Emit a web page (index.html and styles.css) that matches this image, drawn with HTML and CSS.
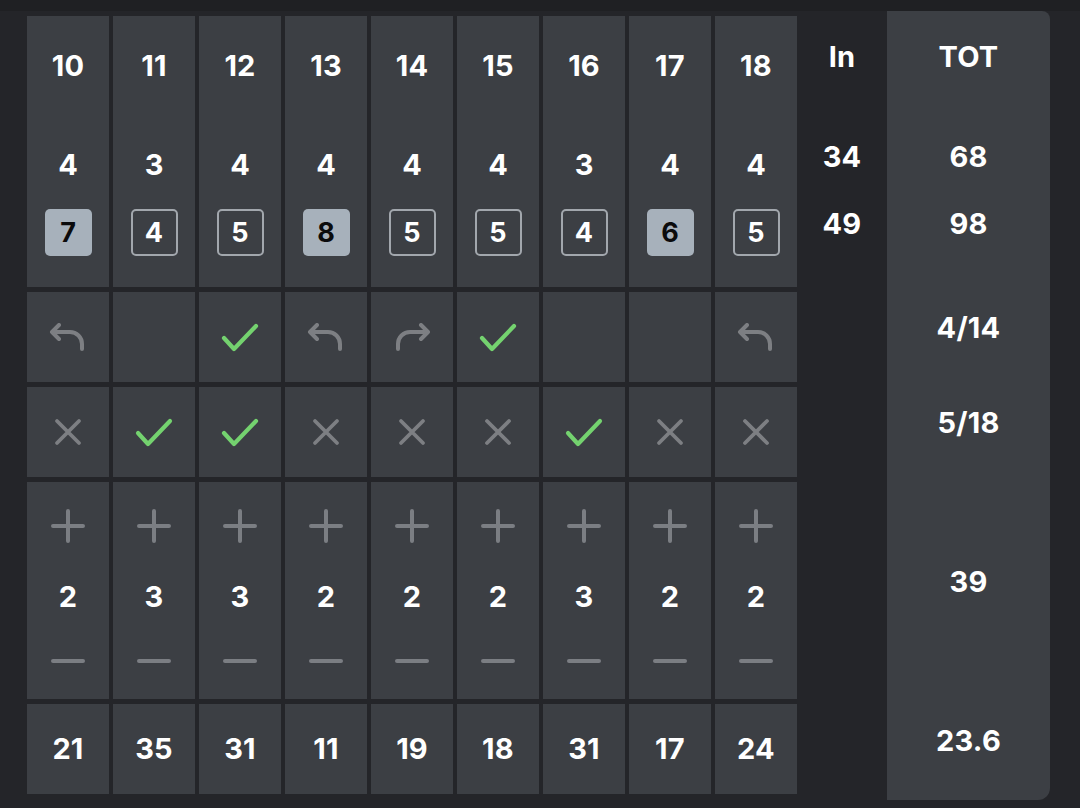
FILE: index.html
```html
<!DOCTYPE html>
<html>
<head>
<meta charset="utf-8">
<link rel="stylesheet" href="styles.css">
<title>Scorecard</title>
</head>
<body>
<svg width="0" height="0" class="defs">
  <defs>
    <symbol id="undo" viewBox="0 0 38 28"><path d="M3 9 H21 A12 12 0 0 1 33 21 V26 M10 2 L3 9 L10 16" fill="none" stroke="currentColor" stroke-width="4" stroke-linecap="round" stroke-linejoin="round"/></symbol>
    <symbol id="redo" viewBox="0 0 38 28"><path d="M35 9 H17 A12 12 0 0 0 5 21 V26 M28 2 L35 9 L28 16" fill="none" stroke="currentColor" stroke-width="4" stroke-linecap="round" stroke-linejoin="round"/></symbol>
    <symbol id="check" viewBox="0 0 38 30"><path d="M3 16 L13 27 L35 4" fill="none" stroke="currentColor" stroke-width="4.2" stroke-linecap="round" stroke-linejoin="round"/></symbol>
    <symbol id="cross" viewBox="0 0 28 28"><path d="M3 3 L25 25 M25 3 L3 25" fill="none" stroke="currentColor" stroke-width="3.8" stroke-linecap="round"/></symbol>
    <symbol id="plus" viewBox="0 0 34 34"><path d="M17 2 V32 M2 17 H32" fill="none" stroke="currentColor" stroke-width="4" stroke-linecap="round"/></symbol>
    <symbol id="minus" viewBox="0 0 34 6"><path d="M2 3 H32" fill="none" stroke="currentColor" stroke-width="4" stroke-linecap="round"/></symbol>
  </defs>
</svg>
<div class="topband"></div>
<div class="board">
  <div class="grid">
    <!-- row 1 -->
    <div class="cell hole"><div class="num">10</div><div class="par">4</div><div class="score filled">7</div></div>
    <div class="cell hole"><div class="num">11</div><div class="par">3</div><div class="score outline">4</div></div>
    <div class="cell hole"><div class="num">12</div><div class="par">4</div><div class="score outline">5</div></div>
    <div class="cell hole"><div class="num">13</div><div class="par">4</div><div class="score filled">8</div></div>
    <div class="cell hole"><div class="num">14</div><div class="par">4</div><div class="score outline">5</div></div>
    <div class="cell hole"><div class="num">15</div><div class="par">4</div><div class="score outline">5</div></div>
    <div class="cell hole"><div class="num">16</div><div class="par">3</div><div class="score outline">4</div></div>
    <div class="cell hole"><div class="num">17</div><div class="par">4</div><div class="score filled">6</div></div>
    <div class="cell hole"><div class="num">18</div><div class="par">4</div><div class="score outline">5</div></div>
    <!-- row 2 fairway -->
    <div class="cell icon"><svg class="ic arrow gray"><use href="#undo"/></svg></div>
    <div class="cell icon"></div>
    <div class="cell icon"><svg class="ic chk green"><use href="#check"/></svg></div>
    <div class="cell icon"><svg class="ic arrow gray"><use href="#undo"/></svg></div>
    <div class="cell icon"><svg class="ic arrow gray"><use href="#redo"/></svg></div>
    <div class="cell icon"><svg class="ic chk green"><use href="#check"/></svg></div>
    <div class="cell icon"></div>
    <div class="cell icon"></div>
    <div class="cell icon"><svg class="ic arrow gray"><use href="#undo"/></svg></div>
    <!-- row 3 GIR -->
    <div class="cell icon"><svg class="ic x gray"><use href="#cross"/></svg></div>
    <div class="cell icon"><svg class="ic chk green"><use href="#check"/></svg></div>
    <div class="cell icon"><svg class="ic chk green"><use href="#check"/></svg></div>
    <div class="cell icon"><svg class="ic x gray"><use href="#cross"/></svg></div>
    <div class="cell icon"><svg class="ic x gray"><use href="#cross"/></svg></div>
    <div class="cell icon"><svg class="ic x gray"><use href="#cross"/></svg></div>
    <div class="cell icon"><svg class="ic chk green"><use href="#check"/></svg></div>
    <div class="cell icon"><svg class="ic x gray"><use href="#cross"/></svg></div>
    <div class="cell icon"><svg class="ic x gray"><use href="#cross"/></svg></div>
    <!-- row 4 putts -->
    <div class="cell putts"><svg class="pm plus"><use href="#plus"/></svg><div class="num">2</div><svg class="pm minus"><use href="#minus"/></svg></div>
    <div class="cell putts"><svg class="pm plus"><use href="#plus"/></svg><div class="num">3</div><svg class="pm minus"><use href="#minus"/></svg></div>
    <div class="cell putts"><svg class="pm plus"><use href="#plus"/></svg><div class="num">3</div><svg class="pm minus"><use href="#minus"/></svg></div>
    <div class="cell putts"><svg class="pm plus"><use href="#plus"/></svg><div class="num">2</div><svg class="pm minus"><use href="#minus"/></svg></div>
    <div class="cell putts"><svg class="pm plus"><use href="#plus"/></svg><div class="num">2</div><svg class="pm minus"><use href="#minus"/></svg></div>
    <div class="cell putts"><svg class="pm plus"><use href="#plus"/></svg><div class="num">2</div><svg class="pm minus"><use href="#minus"/></svg></div>
    <div class="cell putts"><svg class="pm plus"><use href="#plus"/></svg><div class="num">3</div><svg class="pm minus"><use href="#minus"/></svg></div>
    <div class="cell putts"><svg class="pm plus"><use href="#plus"/></svg><div class="num">2</div><svg class="pm minus"><use href="#minus"/></svg></div>
    <div class="cell putts"><svg class="pm plus"><use href="#plus"/></svg><div class="num">2</div><svg class="pm minus"><use href="#minus"/></svg></div>
    <!-- row 5 -->
    <div class="cell plain"><div class="num">21</div></div>
    <div class="cell plain"><div class="num">35</div></div>
    <div class="cell plain"><div class="num">31</div></div>
    <div class="cell plain"><div class="num">11</div></div>
    <div class="cell plain"><div class="num">19</div></div>
    <div class="cell plain"><div class="num">18</div></div>
    <div class="cell plain"><div class="num">31</div></div>
    <div class="cell plain"><div class="num">17</div></div>
    <div class="cell plain"><div class="num">24</div></div>
  </div>
  <div class="incol">
    <div class="num">In</div>
    <div class="num gap-a">34</div>
    <div class="num gap-b">49</div>
  </div>
  <div class="tot">
    <div class="tsec first">
      <div class="num">TOT</div>
      <div class="num gap-a">68</div>
      <div class="num gap-b">98</div>
    </div>
    <div class="tsec short"><div class="num">4/14</div></div>
    <div class="tsec short"><div class="num">5/18</div></div>
    <div class="tsec tall"><div class="num">39</div></div>
    <div class="tsec short last"><div class="num">23.6</div></div>
  </div>
</div>
</body>
</html>
```
FILE: styles.css
```css
html, body {
  margin: 0;
  padding: 0;
  background: #242529;
  width: 1080px;
  height: 808px;
  overflow: hidden;
}
body {
  font-family: "Inter", "Liberation Sans", sans-serif;
  color: #ffffff;
  position: relative;
}
.defs { position: absolute; }
.topband {
  height: 11px;
  background: #1f2023;
}
.board {
  display: flex;
  align-items: flex-start;
  padding-left: 27px;
}
.grid {
  margin-top: 5px;
  display: grid;
  grid-template-columns: repeat(9, 82px);
  grid-template-rows: 271px 90px 90px 217px 90px;
  column-gap: 4px;
  row-gap: 5px;
}
.cell {
  background: #3c3f44;
  display: flex;
  flex-direction: column;
  align-items: center;
}
.num {
  font-size: 29px;
  font-weight: 700;
  line-height: 34px;
  height: 34px;
  letter-spacing: 0.2px;
}
.hole { padding-top: 33px; }
.hole .par { font-size: 29px; font-weight: 700; line-height: 34px; height: 34px; margin-top: 65px; }
.score {
  margin-top: 27px;
  width: 47px;
  height: 47px;
  box-sizing: border-box;
  border-radius: 5px;
  display: flex;
  align-items: center;
  justify-content: center;
  font-size: 27px;
  font-weight: 700;
}
.score.filled { background: #a7b1bb; color: #0b0b0c; }
.score.outline { border: 2px solid #a2a7ad; color: #ffffff; }
.icon { justify-content: center; }
.ic { display: block; }
.arrow { width: 38px; height: 28px; }
.chk { width: 38px; height: 30px; }
.x { width: 28px; height: 28px; }
.gray { color: #7d7f83; }
.green { color: #74d26f; }
.putts { padding-top: 27px; }
.pm { display: block; color: #7b7e83; width: 34px; }
.plus { height: 34px; }
.putts .num { margin-top: 37px; }
.minus { height: 6px; margin-top: 44px; }
.plain { justify-content: center; }
.incol {
  width: 90px;
  margin-top: 5px;
  padding-top: 24px;
  display: flex;
  flex-direction: column;
  align-items: center;
}
.gap-a { margin-top: 66px; }
.gap-b { margin-top: 33px; }
.tot {
  width: 163px;
  height: 789px;
  box-sizing: border-box;
  background: #3c3f44;
  border-radius: 0 8px 12px 0;
  display: flex;
  flex-direction: column;
  gap: 5px;
}
.tsec {
  display: flex;
  flex-direction: column;
  align-items: center;
  justify-content: center;
  padding-bottom: 18px;
  box-sizing: border-box;
}
.tsec.first { height: 276px; justify-content: flex-start; padding: 29px 0 0; }
.tsec.short { height: 90px; }
.tsec.tall { height: 217px; }
.tsec.last { padding-bottom: 16px; }
```
